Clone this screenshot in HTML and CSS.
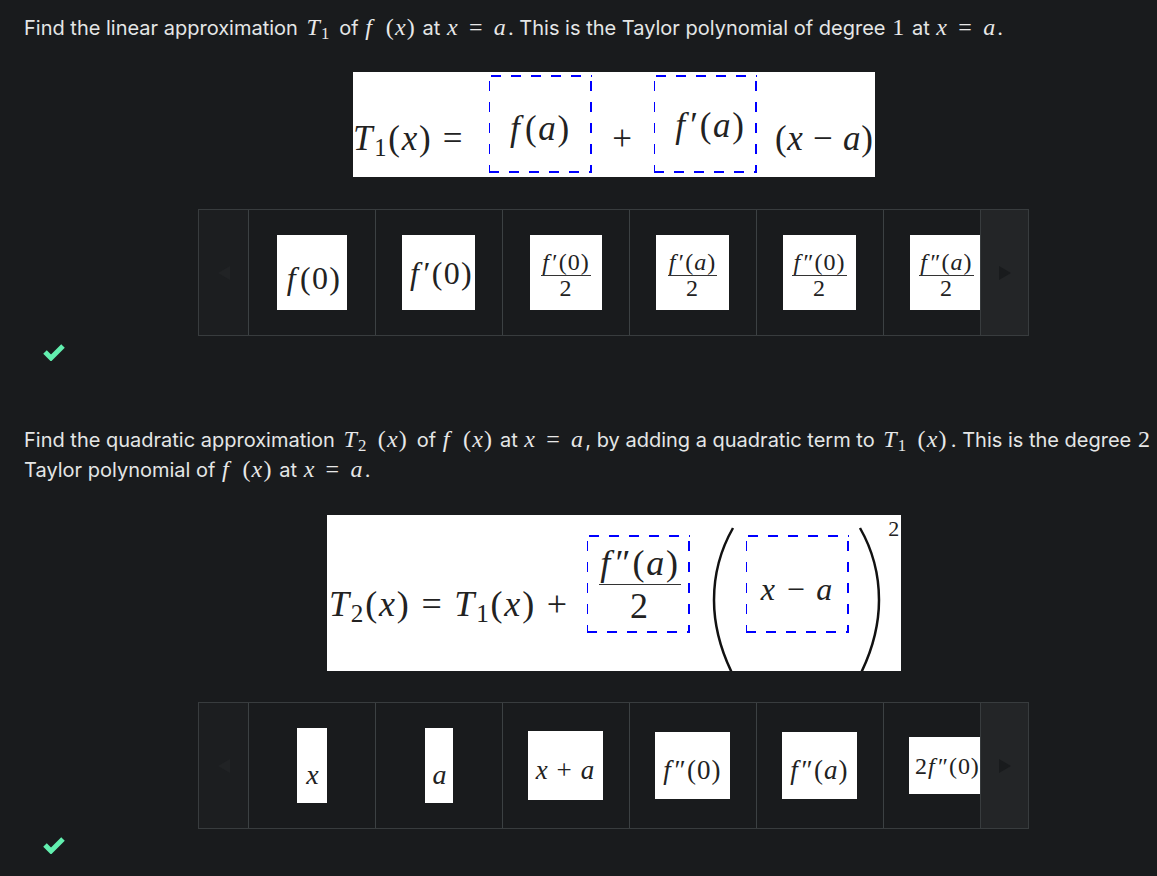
FILE: index.html
```html
<!DOCTYPE html>
<html lang="en">
<head>
  <meta charset="UTF-8">
  <title>Taylor polynomial approximations</title>
  <link rel="stylesheet" href="styles.css">
</head>
<body>

  <section class="question">
    <p class="prompt">Find the linear approximation <span class="m m-t"><i>T</i><sub>1</sub></span> of <span class="m"><i class="f">f</i> (<i>x</i>)</span> at <span class="m"><i>x</i> = <i>a</i></span>. This is the Taylor polynomial of degree <span class="m">1</span> at <span class="m"><i>x</i> = <i>a</i></span>.</p>

    <div class="figure figure-one">
      <div class="term term-lhs"><i>T</i><sub>1</sub>(<i>x</i>) =</div>
      <div class="drop drop-one"><span><i class="f">f</i>(<i>a</i>)</span></div>
      <div class="term term-plus">+</div>
      <div class="drop drop-one drop-raised"><span><i class="f">f</i>′(<i>a</i>)</span></div>
      <div class="term term-rhs">(<i>x</i> − <i>a</i>)</div>
    </div>

    <div class="carousel">
      <button class="arrow arrow-prev"><span class="tri tri-left"></span></button>
      <div class="track">
        <div class="cell"><div class="chip w70 h75 big"><span><i class="f">f</i>(0)</span></div></div>
        <div class="cell"><div class="chip w73 h75 big raise"><span><i class="f">f</i>′(0)</span></div></div>
        <div class="cell"><div class="chip w72 h75"><div class="frac"><span><i class="f">f</i>′(0)</span><span>2</span></div></div></div>
        <div class="cell"><div class="chip w73 h75"><div class="frac"><span><i class="f">f</i>′(<i>a</i>)</span><span>2</span></div></div></div>
        <div class="cell"><div class="chip w73 h75"><div class="frac"><span><i class="f">f</i>″(0)</span><span>2</span></div></div></div>
        <div class="cell"><div class="chip w73 h75"><div class="frac"><span><i class="f">f</i>″(<i>a</i>)</span><span>2</span></div></div></div>
      </div>
      <button class="arrow arrow-next"><span class="tri tri-right"></span></button>
    </div>

    <svg class="check" width="24" height="18" viewBox="0 0 24 18"><path d="M3 9l6 6L21 3"/></svg>
  </section>

  <section class="question question-two">
    <p class="prompt">Find the quadratic approximation <span class="m m-t"><i>T</i><sub>2</sub> (<i>x</i>)</span> of <span class="m"><i class="f">f</i> (<i>x</i>)</span> at <span class="m"><i>x</i> = <i>a</i></span>, by adding a quadratic term to <span class="m m-t"><i>T</i><sub>1</sub> (<i>x</i>)</span>. This is the degree <span class="m">2</span> Taylor polynomial of <span class="m"><i class="f">f</i> (<i>x</i>)</span> at <span class="m"><i>x</i> = <i>a</i></span>.</p>

    <div class="figure figure-two">
      <div class="term term-lhs2"><i>T</i><sub>2</sub>(<i>x</i>) = <i>T</i><sub>1</sub>(<i>x</i>) +</div>
      <div class="drop drop-two"><div class="frac frac-big"><span><i class="f">f</i>″(<i>a</i>)</span><span>2</span></div></div>
      <svg class="paren paren-left" width="24" height="156" viewBox="0 0 24 156"><path d="M22 13C10 34 3 60 3 85C3 110 10 136 22 160"/></svg>
      <div class="drop drop-three"><span><i>x</i> − <i>a</i></span></div>
      <svg class="paren paren-right" width="24" height="156" viewBox="0 0 24 156"><path d="M2 13C14 34 21 60 21 85C21 110 14 136 2 160"/></svg>
      <span class="power">2</span>
    </div>

    <div class="carousel">
      <button class="arrow arrow-prev"><span class="tri tri-left"></span></button>
      <div class="track">
        <div class="cell"><div class="chip w30 h75 low"><span><i>x</i></span></div></div>
        <div class="cell"><div class="chip w28 h75 low"><span><i>a</i></span></div></div>
        <div class="cell"><div class="chip w75 h69 mid"><span><i>x</i> + <i>a</i></span></div></div>
        <div class="cell"><div class="chip w75 h67 mid"><span><i class="f">f</i>″(0)</span></div></div>
        <div class="cell"><div class="chip w75 h67 mid"><span><i class="f">f</i>″(<i>a</i>)</span></div></div>
        <div class="cell"><div class="chip w75 h57 small"><span>2<i class="f">f</i>″(0)</span></div></div>
      </div>
      <button class="arrow arrow-next"><span class="tri tri-right"></span></button>
    </div>

    <svg class="check" width="24" height="18" viewBox="0 0 24 18"><path d="M3 9l6 6L21 3"/></svg>
  </section>

</body>
</html>
```

FILE: styles.css
```css
body {
  margin: 0;
  padding: 13px 0 0 24px;
  background-color: #191b1d;
  color: #e4e6e6;
  font-family: Inter, "Liberation Sans", sans-serif;
  font-size: 20px;
  line-height: 30px;
}
.question-two {
  margin-top: 64px;
}
.prompt {
  margin: 0;
}
.m {
  font-family: "Liberation Serif", serif;
  font-size: 24px;
  line-height: 24px;
  letter-spacing: 0.05em;
  word-spacing: 0.12em;
  color: #e8e8e8;
  padding: 0 1px;
}
.m-t {
  padding: 0 3px;
}
.m sub,
.term sub {
  font-size: 0.7em;
  line-height: 0;
  vertical-align: -0.25em;
}
.f {
  margin-right: 0.1em;
}

/* white math pictures */
.figure {
  background-color: #fff;
  color: #222;
  font-family: "Liberation Serif", serif;
  letter-spacing: 0.05em;
  display: flex;
  align-items: flex-start;
  position: relative;
  overflow: hidden;
  white-space: nowrap;
}
.figure-one {
  width: 522px;
  height: 105px;
  margin: 29px 0 32px 329px;
  font-size: 35px;
  line-height: 40px;
}
.figure-two {
  width: 574px;
  height: 156px;
  margin: 30px 0 31px 303px;
  font-size: 36px;
  line-height: 40px;
}
.drop {
  --blue: #0000ff;
  box-sizing: border-box;
  display: flex;
  align-items: center;
  justify-content: center;
  flex-shrink: 0;
  background:
    repeating-linear-gradient(90deg, var(--blue) 0 10px, transparent 10px 20px) top left 2px / 100% 2px no-repeat,
    repeating-linear-gradient(90deg, var(--blue) 0 10px, transparent 10px 20px) bottom left / 100% 2px no-repeat,
    repeating-linear-gradient(180deg, var(--blue) 0 10px, transparent 10px 21px) top 6px left / 1px 100% no-repeat,
    repeating-linear-gradient(180deg, var(--blue) 0 10px, transparent 10px 21px) top 6px right / 2px 100% no-repeat;
}
.drop-one {
  width: 103px;
  height: 98px;
  margin-top: 3px;
}
.drop-one span {
  margin-top: 18px;
  margin-bottom: 8px;
}
.drop-raised span {
  margin-top: 12px;
  margin-left: 10px;
}
.drop-two {
  width: 103px;
  height: 98px;
  margin-top: 20px;
}
.drop-two .frac {
  margin-left: 3px;
}
.drop-three {
  width: 103px;
  height: 98px;
  margin-top: 20px;
  font-size: 32px;
}
.drop-three span {
  margin-top: 10px;
}
.term {
  flex-shrink: 0;
}
.term-lhs {
  width: 136px;
  margin-top: 47px;
}
.term-plus {
  width: 62px;
  text-align: center;
  margin-top: 47px;
}
.term-rhs {
  margin: 47px 0 0 18px;
  letter-spacing: 0.02em;
}
.term-lhs2 {
  width: 258px;
  margin-top: 69px;
  padding-left: 2px;
}
.paren {
  flex-shrink: 0;
}
.paren-left {
  margin: 0 11px 0 21px;
}
.paren-right {
  margin-left: 9px;
}
.paren path {
  fill: none;
  stroke: #111;
  stroke-width: 2.5;
}
.power {
  position: absolute;
  top: -6px;
  right: 0;
  font-size: 22px;
}
.frac {
  display: inline-flex;
  flex-direction: column;
  align-items: center;
  font-size: 24px;
  line-height: 25px;
}
.chip .frac {
  margin-top: 6px;
}
.frac span:first-child {
  border-bottom: 1px solid #333;
  padding: 0 1px;
}
.frac-big {
  font-size: 36px;
  line-height: 42px;
}

/* answer carousel */
.carousel {
  width: 831px;
  height: 127px;
  margin-left: 174px;
  box-sizing: border-box;
  display: flex;
  position: relative;
  border: 1px solid #383c3e;
  overflow: hidden;
}
.arrow {
  width: 49px;
  padding: 0;
  border: none;
  background-color: #1c1e20;
  display: flex;
  align-items: center;
  justify-content: center;
  flex-shrink: 0;
}
.arrow-next {
  position: absolute;
  top: 0;
  right: 0;
  bottom: 0;
  width: 48px;
  box-sizing: border-box;
  background-color: #232527;
  border-left: 1px solid #383c3e;
}
.tri {
  width: 0;
  height: 0;
  border-top: 7px solid transparent;
  border-bottom: 7px solid transparent;
}
.tri-left {
  border-right: 12px solid #212325;
}
.tri-right {
  border-left: 12px solid #191b1d;
}
.track {
  display: flex;
}
.cell {
  width: 127px;
  box-sizing: border-box;
  border-left: 1px solid #3c4143;
  display: flex;
  align-items: center;
  justify-content: center;
  flex-shrink: 0;
}
.chip {
  background-color: #fff;
  color: #222;
  font-family: "Liberation Serif", serif;
  font-size: 26px;
  letter-spacing: 0.04em;
  box-sizing: border-box;
  display: flex;
  align-items: center;
  justify-content: center;
  white-space: nowrap;
  flex-shrink: 0;
  overflow: hidden;
}
.big {
  font-size: 32px;
  padding: 10px 0 0 4px;
}
.raise {
  padding: 0 0 0 6px;
}
.low {
  font-size: 28px;
  padding: 18px 0 0 2px;
}
.mid {
  padding-top: 8px;
  font-size: 27px;
}
.small {
  font-size: 24px;
  justify-content: flex-start;
  padding-left: 6px;
}
.w28 { width: 28px; }
.w30 { width: 30px; }
.w70 { width: 70px; }
.w72 { width: 72px; }
.w73 { width: 73px; margin-right: 1px; }
.w75 { width: 75px; margin-right: 1px; }
.h57 { height: 57px; }
.h67 { height: 67px; }
.h69 { height: 69px; }
.h75 { height: 75px; }

.check {
  display: block;
  margin: 7px 0 0 18px;
}
.check path {
  fill: none;
  stroke: #62efaf;
  stroke-width: 5;
}
```
